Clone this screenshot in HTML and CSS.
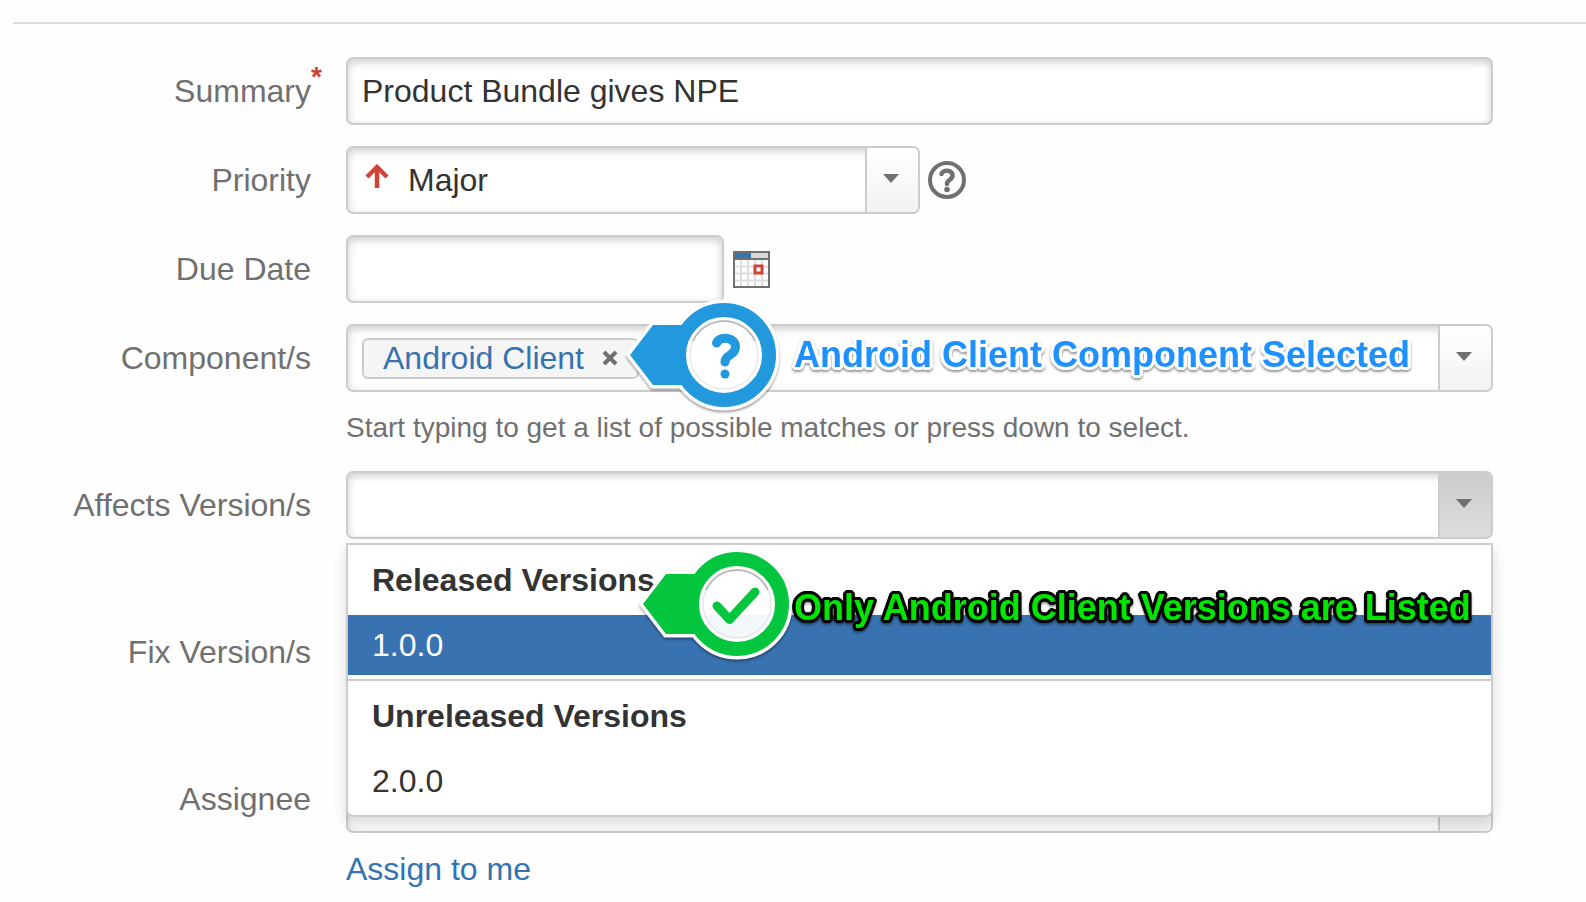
FILE: index.html
```html
<!DOCTYPE html>
<html lang="en">
<head>
<meta charset="UTF-8" />
<meta name="viewport" content="width=device-width, initial-scale=1" />
<title>Edit Issue</title>
<link rel="stylesheet" href="styles.css">
</head>
<body>

<form class="issue-form">

  <div class="field">
    <label for="summary">Summary<span class="required">*</span></label>
    <div class="control">
      <input class="box" type="text" id="summary" value="Product Bundle gives NPE" />
    </div>
  </div>

  <div class="field">
    <label for="priority">Priority</label>
    <div class="control inline">
      <div class="box combo combo-medium">
        <svg class="priority-icon" viewBox="0 0 24 24" aria-hidden="true">
          <path d="M12 24V3M2 13L12 3L22 13" fill="none" stroke="#d04437" stroke-width="4.500" />
        </svg>
        <select id="priority">
          <option>Major</option>
        </select>
        <span class="toggle"></span>
      </div>
      <button type="button" class="icon-btn" aria-label="Help">
        <svg width="38" height="38" viewBox="0 0 38 38">
          <circle cx="19" cy="19" r="17" fill="none" stroke="#707070" stroke-width="4" />
          <path d="M13.500 13C14.500 8.500 24.500 8.500 24.500 14.500C24.500 19 19 18.500 19 23" fill="none" stroke="#707070" stroke-width="4.500" stroke-linecap="round" />
          <circle cx="19" cy="28.500" r="2.800" fill="#707070" />
        </svg>
      </button>
    </div>
  </div>

  <div class="field">
    <label for="duedate">Due Date</label>
    <div class="control inline">
      <input class="box box-short" type="text" id="duedate" />
      <button type="button" class="icon-btn" aria-label="Select a date">
        <svg width="38" height="38" viewBox="0 0 38 38">
          <rect x="2" y="2" width="35" height="35" fill="#fff" stroke="#707070" stroke-width="2" />
          <rect x="3" y="3" width="16" height="5" fill="#3b73af" />
          <rect x="19" y="3" width="17" height="5" fill="#d8d8d8" />
          <path d="M1 9H38" stroke="#707070" stroke-width="2" />
          <path d="M9 10V36M16 10V36M23 10V36M30 10V36M3 16.500H36M3 23.500H36M3 30.500H36" stroke="#ddd" stroke-width="2" />
          <rect x="23" y="16" width="7" height="7" fill="#fff" stroke="#d04437" stroke-width="3" />
        </svg>
      </button>
    </div>
  </div>

  <div class="field with-hint">
    <label for="components">Component/s</label>
    <div class="control">
      <div class="box combo">
        <span class="chip">Android Client
          <button type="button" aria-label="Remove Android Client">
            <svg width="16" height="16" viewBox="0 0 16 16">
              <path d="M2 2L14 14M14 2L2 14" stroke="#707070" stroke-width="4" />
            </svg>
          </button>
        </span>
        <input type="text" id="components" />
        <button type="button" class="toggle" aria-label="Show components"></button>
      </div>
      <p class="hint">Start typing to get a list of possible matches or press down to select.</p>

      <svg class="pin pin-blue" width="162" height="122" viewBox="0 0 162 122" aria-hidden="true">
        <g class="pin-halo">
          <path d="M8 60L31 30H60V90H31Z" stroke-width="7" />
          <circle cx="102" cy="60" r="44.500" fill="none" stroke-width="22" />
        </g>
        <path class="pin-fill" d="M8 60L31 30H60V90H31Z" />
        <circle class="pin-ring" cx="102" cy="60" r="45" />
        <circle cx="102" cy="60" r="34" fill="#fff" />
        <circle class="pin-inset" cx="102" cy="60" r="34" />
        <path class="pin-shade" d="M71 46A34 34 0 0 1 133 46" />
        <path class="pin-glyph" d="M94.500 48C98 40.500 113.500 42 113.500 52C113.500 61 103 59 103 67" stroke-width="9" />
        <circle class="pin-fill" cx="103" cy="79" r="4.500" />
      </svg>
      <span class="note note-blue">Android Client Component Selected</span>
    </div>
  </div>

  <div class="field with-hint">
    <label for="affects">Affects Version/s</label>
    <div class="control">
      <div class="box combo">
        <input type="text" id="affects" role="combobox" aria-expanded="true" aria-controls="versions" />
        <button type="button" class="toggle active" aria-label="Show versions"></button>
      </div>

      <div class="suggestions" id="versions" role="listbox">
        <div class="group" role="group" aria-labelledby="released">
          <h5 id="released">Released Versions</h5>
          <div class="option selected" role="option" aria-selected="true">1.0.0</div>
        </div>
        <div class="group" role="group" aria-labelledby="unreleased">
          <h5 id="unreleased">Unreleased Versions</h5>
          <div class="option" role="option" aria-selected="false">2.0.0</div>
        </div>
      </div>

      <svg class="pin pin-green" width="162" height="122" viewBox="0 0 162 122" aria-hidden="true">
        <g class="pin-halo">
          <path d="M8 60L31 30H60V90H31Z" stroke-width="7" />
          <circle cx="102" cy="60" r="44.500" fill="none" stroke-width="22" />
        </g>
        <path class="pin-fill" d="M8 60L31 30H60V90H31Z" />
        <circle class="pin-ring" cx="102" cy="60" r="45" />
        <circle cx="102" cy="60" r="34" fill="#fff" fill-opacity="0.94" />
        <circle class="pin-inset" cx="102" cy="60" r="34" />
        <path class="pin-shade" d="M71 46A34 34 0 0 1 133 46" />
        <path class="pin-glyph" d="M82 62L94.500 75.500L120 48" stroke-width="9" />
      </svg>
      <span class="note note-green">Only Android Client Versions are Listed</span>
    </div>
  </div>

  <div class="field with-hint">
    <label for="fix">Fix Version/s</label>
    <div class="control">
      <div class="box combo">
        <input type="text" id="fix" />
        <button type="button" class="toggle" aria-label="Show versions"></button>
      </div>
    </div>
  </div>

  <div class="field">
    <label for="assignee">Assignee</label>
    <div class="control">
      <div class="box combo">
        <input type="text" id="assignee" />
        <button type="button" class="toggle" aria-label="Show users"></button>
      </div>
      <a class="assign-link" href="#">Assign to me</a>
    </div>
  </div>

</form>

</body>
</html>
```
FILE: styles.css
```css
* {
  box-sizing: border-box;
  margin: 0;
  padding: 0;
}
body {
  font-family: "Liberation Sans", Arial, Helvetica, sans-serif;
  font-size: 32px;
  color: #333;
  background: #fefefe;
}
input, select, button {
  font: inherit;
  color: inherit;
  border: none;
  background: none;
  outline: none;
}
button {
  cursor: pointer;
}

.issue-form {
  margin: 22px 0 0 13px;
  padding: 33px 93px 8px 0;
  border-top: 2px solid #ddd;
  display: flex;
  flex-direction: column;
  gap: 21px;
}
.field {
  display: grid;
  grid-template-columns: 298px minmax(0, 1fr);
  column-gap: 35px;
  align-items: start;
}
.with-hint {
  min-height: 126px;
}
.field > label {
  position: relative;
  justify-self: end;
  line-height: 68px;
  color: #707070;
}
.required {
  position: absolute;
  left: 100%;
  top: -14px;
  font-size: 28px;
  font-weight: bold;
  color: #d04437;
}
.control {
  position: relative;
}
.inline {
  display: flex;
  align-items: center;
  gap: 8px;
}

/* Text boxes and combos */
.box {
  width: 100%;
  height: 68px;
  padding: 0 14px;
  border: 2px solid #ccc;
  border-radius: 7px;
  background: #fff;
  box-shadow: inset 0 3px 8px #ccc;
}
.box-short {
  width: 378px;
}
.combo {
  display: flex;
  align-items: center;
  padding-right: 0;
}
.combo-medium {
  width: 574px;
}
.combo input, .combo select {
  flex: 1;
  min-width: 0;
  height: 100%;
  appearance: none;
}
.priority-icon {
  width: 24px;
  height: 24px;
  margin: 0 19px 8px 3px;
}
.toggle {
  width: 53px;
  align-self: stretch;
  display: flex;
  justify-content: center;
  align-items: center;
  padding: 0 4px 4px 0;
  border-left: 2px solid #ccc;
  border-radius: 0 5px 5px 0;
  background: linear-gradient(#fff, #f2f2f2);
}
.toggle::after {
  content: "";
  border: 8px solid transparent;
  border-top: 9px solid #707070;
  border-bottom: none;
}
.toggle.active {
  background: linear-gradient(#ccc, #ddd);
}
.icon-btn {
  display: flex;
}
.chip {
  display: flex;
  align-items: center;
  gap: 18px;
  height: 41px;
  padding: 0 19px;
  border: 2px solid #ccc;
  border-radius: 6px;
  background: #f5f5f5;
  color: #3572b0;
}
.chip button {
  display: flex;
}
.hint, .assign-link {
  display: block;
  padding-top: 18px;
  line-height: 36px;
}
.hint {
  height: 50px;
  font-size: 28px;
  color: #707070;
}
.assign-link {
  color: #3572b0;
  text-decoration: none;
}

/* Version suggestions */
.suggestions {
  position: absolute;
  top: 72px;
  left: 0;
  right: 0;
  z-index: 2;
  border: 2px solid #ccc;
  border-radius: 0 0 7px 7px;
  background: #fff;
  box-shadow: 0 7px 14px rgba(0, 0, 0, 0.15);
}
.group {
  padding-bottom: 4px;
}
.group + .group {
  border-top: 2px solid #ccc;
}
.group h5 {
  padding: 0 24px;
  font-size: 32px;
  line-height: 70px;
}
.option {
  padding: 0 24px;
  line-height: 60px;
}
.option.selected {
  background: #3872b0;
  color: #fff;
}

/* Callouts drawn over the form */
.pin {
  position: absolute;
  z-index: 3;
}
.pin-halo {
  fill: #fff;
  stroke: #fff;
  filter: drop-shadow(0 2px 1px rgba(0, 0, 0, 0.35));
}
.pin-fill {
  fill: currentColor;
}
.pin-ring {
  fill: none;
  stroke: currentColor;
  stroke-width: 14px;
}
.pin-inset {
  fill: none;
  stroke: #000;
  stroke-opacity: 0.12;
}
.pin-shade {
  fill: none;
  stroke: #000;
  stroke-width: 2px;
  stroke-opacity: 0.2;
}
.pin-glyph {
  fill: none;
  stroke: currentColor;
  stroke-linecap: round;
  stroke-linejoin: round;
}
.pin-blue {
  top: -29px;
  left: 276px;
  color: #2299dd;
}
.pin-green {
  top: 73px;
  left: 289px;
  color: #04c53e;
}
.note {
  --line: #fff;
  position: absolute;
  left: 448px;
  z-index: 4;
  font-size: 36px;
  font-weight: bold;
  line-height: 40px;
  white-space: nowrap;
  text-shadow:
    3px 0 var(--line), -3px 0 var(--line), 0 3px var(--line), 0 -3px var(--line),
    3px 1px var(--line), 3px -1px var(--line), -3px 1px var(--line), -3px -1px var(--line),
    1px 3px var(--line), -1px 3px var(--line), 1px -3px var(--line), -1px -3px var(--line),
    2px 2px var(--line), -2px 2px var(--line), 2px -2px var(--line), -2px -2px var(--line);
  filter: drop-shadow(0 2px 1px rgba(0, 0, 0, 0.4));
}
.note-blue {
  top: 11px;
  color: #1e90ff;
}
.note-green {
  --line: #000;
  top: 117px;
  color: #00e600;
}
```
